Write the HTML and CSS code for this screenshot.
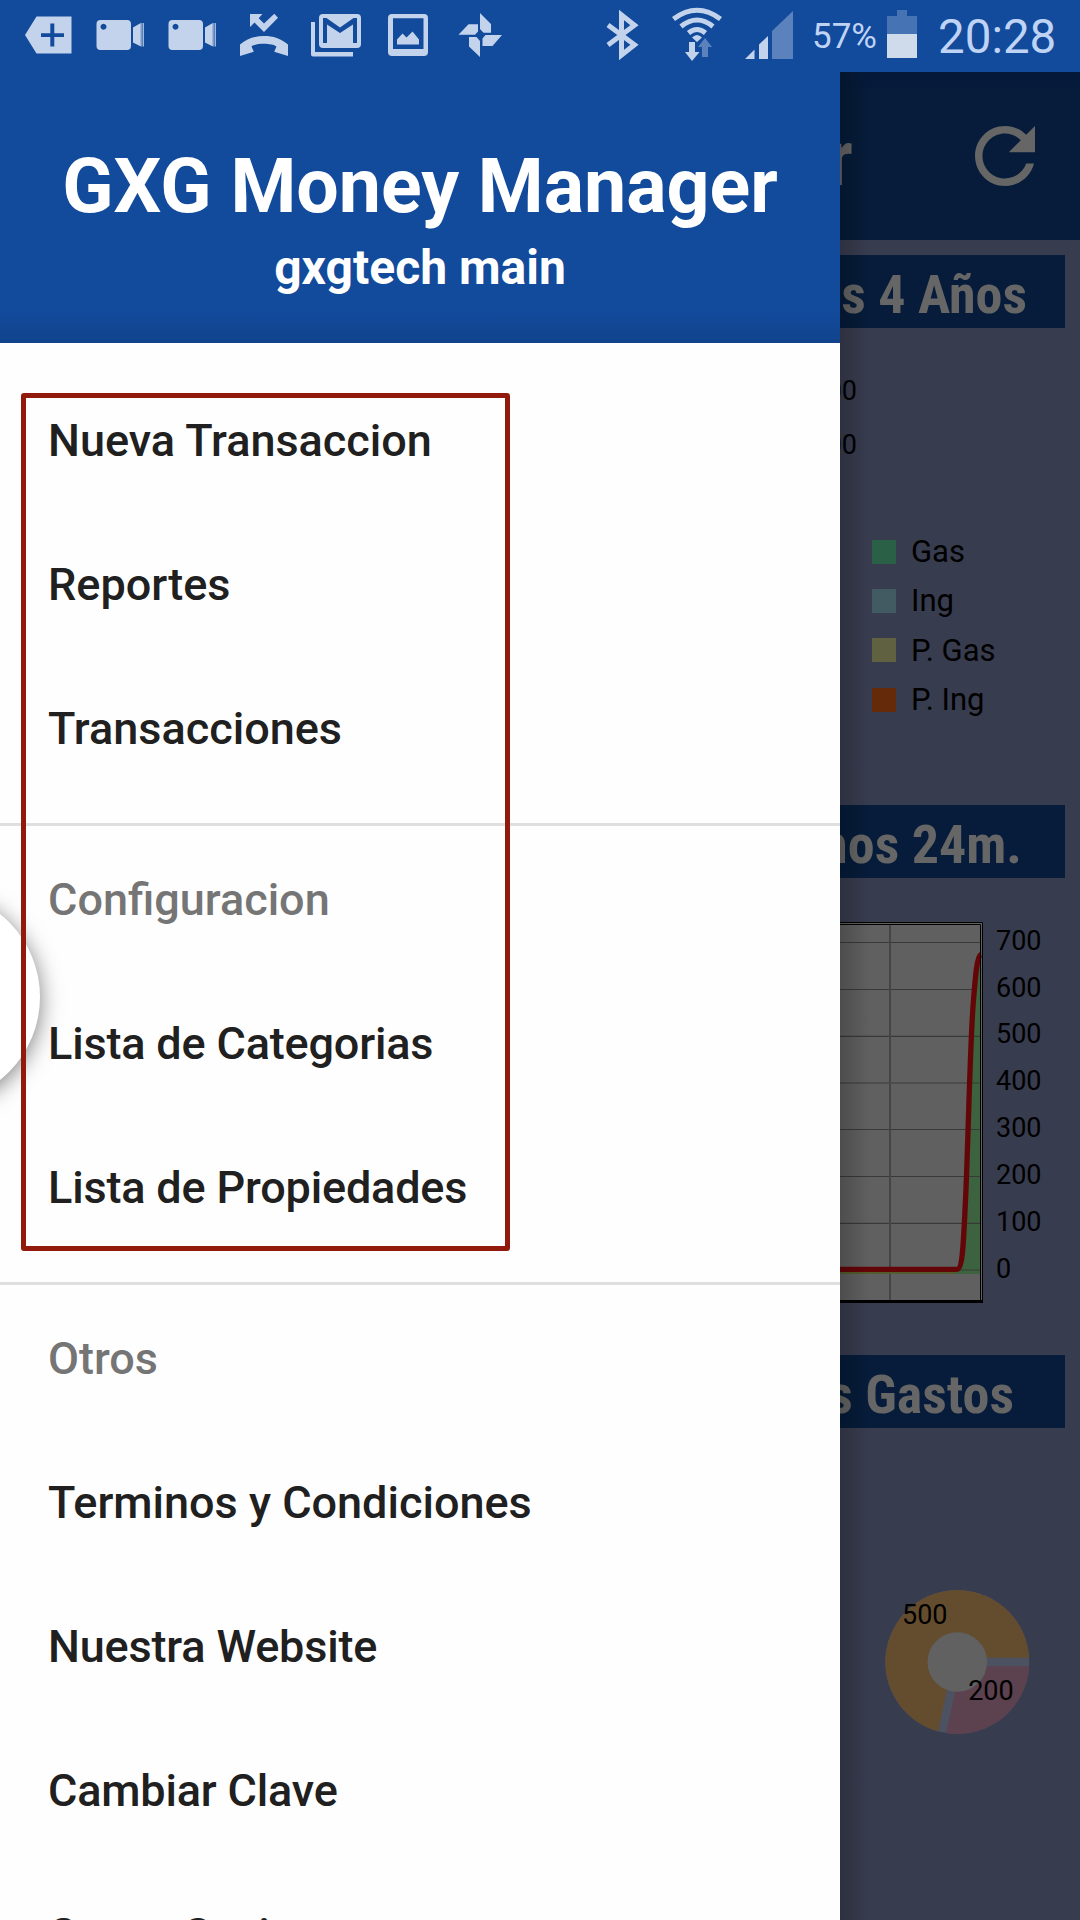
FILE: index.html
```html
<!DOCTYPE html>
<html lang="es">
<head>
<meta charset="utf-8">
<title>GXG Money Manager</title>
<link rel="stylesheet" href="styles.css">
</head>
<body>
<div class="phone">
  <header class="status">
    <div class="status-left">
      <svg class="slot" viewBox="12 0 72 72"><path fill-rule="evenodd" d="M25 35 36.5 16.500H71.500V53.500H36.500ZM50.300 23.500V33.200H41V37H50.300V46.500H54.300V37H64V33.200H54.300V23.500Z"/></svg>
      <svg class="slot" viewBox="84 0 72 72"><path fill-rule="evenodd" d="M100.500 20H127a4 4 0 0 1 4 4V46a4 4 0 0 1-4 4H100.500a4 4 0 0 1-4-4V24a4 4 0 0 1 4-4ZM103.500 23.800a3 3 0 1 0 .01 0Z"/><path d="M133 27.500 140.800 23V46.500L133 42.500ZM141.400 23h.9v23.500h-.9ZM142.900 23h.9v23.500h-.9Z"/></svg>
      <svg class="slot" viewBox="84 0 72 72"><path fill-rule="evenodd" d="M100.500 20H127a4 4 0 0 1 4 4V46a4 4 0 0 1-4 4H100.500a4 4 0 0 1-4-4V24a4 4 0 0 1 4-4ZM103.500 23.800a3 3 0 1 0 .01 0Z"/><path d="M133 27.500 140.800 23V46.500L133 42.500ZM141.400 23h.9v23.500h-.9ZM142.900 23h.9v23.500h-.9Z"/></svg>
      <svg class="slot" viewBox="228 0 72 72"><path d="M250 14H262.400L258.700 18.200 264 23.500 274.300 13.700 278 17.700 264 32 254.500 22.500 250 27ZM240 56V44.500C247 38.500 255 36 264 36S281 38.500 288 44.500V56L274.200 51.700 276.500 46.500C272 42.800 256 42.800 251.500 46.500L253.800 51.700Z"/></svg>
      <svg class="slot" viewBox="300 0 72 72"><path d="M311 22h4v30h38v4.500H313a2 2 0 0 1-2-2Z"/><rect x="319" y="14" width="42" height="34" rx="4"/><path class="cut" d="M323 43V18H326.500L340 27.500 353.500 18H357V43H353V24.500L340 33 327 24.500V43Z"/></svg>
      <svg class="slot" viewBox="372 0 72 72"><path fill-rule="evenodd" d="M392 14H424a4 4 0 0 1 4 4V52a4 4 0 0 1-4 4H392a4 4 0 0 1-4-4V18a4 4 0 0 1 4-4ZM393 18.200V49H423.500V18.200Z"/><path d="M397 44.500V39.500L402.500 33.500 406.500 37.500 412.500 31.500 419 39.500V44.500Z"/></svg>
      <svg class="slot" viewBox="444 0 72 72"><path d="M480 13 491 24V32.800H483.500L480 29ZM502 35 492.500 46H482.500V38.500L485.500 35ZM480 57 469 46.500V37H476.500L480 41ZM458.500 34.700 468.500 24.300H478V31.500L475 34.700Z"/></svg>
    </div>
    <div class="status-right">
      <svg class="bt" viewBox="606 0 34 72"><path class="line" d="M608 25 634.500 44.700 621.500 55V15L634.500 25.300 608 45"/></svg>
      <svg class="wifi" viewBox="670 0 54 72"><path class="arc" d="M673.500 19Q697 1.500 720.500 19M681 26.500Q697 13.500 713 26.500M688.500 33Q697 26 705.500 33"/><path d="M692 37.500Q697 32.500 702 37.500L697 42ZM689 42h6v10h4.500L692 61 685 52h4Z"/><path class="faint" d="M702 57V47H698L705 38 712 47H708V57Z"/></svg>
      <svg class="signal" viewBox="744 0 50 72"><path d="M745 59 754.500 49.500V59ZM759 59V44.500L768 36V59Z"/><path class="faint" d="M772 59V31L793 11V59Z"/></svg>
      <span class="percent">57%</span>
      <svg class="battery" viewBox="887 0 30 72"><path class="empty" d="M897 10h10v6h10v19H887V16h10Z"/><path class="full" d="M887 34h30v24H887Z"/></svg>
      <span class="clock">20:28</span>
    </div>
  </header>

  <main class="page">
    <div class="appbar">
      <span class="appbar-title">GXG Money Manager</span>
      <svg class="refresh" viewBox="0 0 24 24"><path d="M17.650 6.350C16.200 4.900 14.210 4 12 4c-4.420 0-7.990 3.580-7.990 8s3.570 8 7.990 8c3.730 0 6.840-2.550 7.730-6h-2.080c-.82 2.330-3.040 4-5.650 4-3.310 0-6-2.690-6-6s2.690-6 6-6c1.660 0 3.140.69 4.220 1.780L13 11h7V4l-2.350 2.350z"/></svg>
    </div>
    <section class="panel">
      <h2 class="heading years"><span>Ultimos 4 Años</span></h2>
      <div class="bars">
        <div class="ticks"><span>100</span><span>00</span></div>
        <ul class="legend">
          <li><i class="swatch gas"></i>Gas</li>
          <li><i class="swatch ing"></i>Ing</li>
          <li><i class="swatch pgas"></i>P. Gas</li>
          <li><i class="swatch ping"></i>P. Ing</li>
        </ul>
      </div>
    </section>
    <section class="panel">
      <h2 class="heading months"><span>Ultimos 24m.</span></h2>
      <svg class="chart" viewBox="780 878 300 477">
        <rect class="plot" x="780" y="922" width="203" height="381"/>
        <path class="grid" d="M780 942.500H981M780 989.500H981M780 1036.300H981M780 1083H981M780 1129.500H981M780 1176.500H981M780 1223.400H981M780 1270H981"/>
        <path class="gridv" d="M890 924V1301"/>
        <path class="area" d="M780 1274V1270H958C966 1262 966 1190 969 1110C972 1020 974 957 981 953V1274Z"/>
        <path class="grid" d="M958 1270H981M966 1223.400H981M968 1176.500H981M969 1129.500H981M971 1083H981M973 1036.300H981"/>
        <path class="olive" d="M780 1272.500H956"/>
        <path class="curve" d="M780 1269.300H957C963 1269.300 963.500 1240 965.500 1200C968 1150 970 1040 973.500 1000C975.500 975 977 956 981 954.500"/>
        <path class="frame" d="M780 922.500H982.500V1303M780 924.500H980.500V1302"/>
        <path class="base" d="M780 1301.500H983"/>
        <g class="axis">
          <text x="996" y="950">700</text><text x="996" y="997">600</text><text x="996" y="1043.300">500</text><text x="996" y="1090">400</text>
          <text x="996" y="1137">300</text><text x="996" y="1184">200</text><text x="996" y="1231">100</text><text x="996" y="1278">0</text>
        </g>
      </svg>
    </section>
    <section class="panel">
      <h2 class="heading expenses"><span>Ultimos Gastos</span></h2>
      <svg class="donut" viewBox="780 1428 300 477">
        <circle class="gap" cx="957.300" cy="1662" r="72"/>
        <path class="pink" d="M957.300 1666.300H1029.200A72 72 0 0 1 946 1733.100L961.500 1663Z"/>
        <path class="orange" d="M957.300 1657.700H1029.200A72 72 0 1 0 938 1731.400L953 1662Z"/>
        <circle class="hole" cx="957.300" cy="1662" r="29.800"/>
        <g class="axis"><text x="902" y="1624">500</text><text x="968.200" y="1700">200</text></g>
      </svg>
    </section>
  </main>

  <aside class="drawer">
    <div class="drawer-head">
      <h1 class="app-name">GXG Money Manager</h1>
      <p class="account">gxgtech main</p>
    </div>
    <nav>
      <ul class="menu">
        <li>Nueva Transaccion</li>
        <li>Reportes</li>
        <li>Transacciones</li>
      </ul>
      <ul class="menu divided">
        <li class="group">Configuracion</li>
        <li class="tight">Lista de Categorias</li>
        <li class="tight">Lista de Propiedades</li>
      </ul>
      <ul class="menu divided">
        <li class="group">Otros</li>
        <li>Terminos y Condiciones</li>
        <li class="tight">Nuestra Website</li>
        <li class="tight">Cambiar Clave</li>
        <li>Cerrar Sesion</li>
      </ul>
    </nav>
    <div class="bubble"></div>
    <div class="callout"></div>
  </aside>
</div>
</body>
</html>
```
FILE: styles.css
```css
* { box-sizing: border-box; }
body, h1, h2, p, ul { margin: 0; padding: 0; }
ul { list-style: none; }
svg { display: block; flex: none; }
body { font-family: Roboto, "Liberation Sans", sans-serif; }

.phone {
  position: relative;
  width: 1080px;
  height: 1920px;
  overflow: hidden;
  background: #383c4f;
}

/* Status bar */
.status {
  position: relative;
  z-index: 3;
  display: flex;
  justify-content: space-between;
  height: 72px;
  padding: 0 23px 0 12px;
  background: #124a9c;
  fill: #c3d3ec;
}
.status-left, .status-right { display: flex; }
.slot { width: 72px; height: 72px; }
.cut { fill: #124a9c; }
.bt { width: 34px; height: 72px; margin-right: 30px; }
.wifi { width: 54px; height: 72px; margin-right: 20px; }
.signal { width: 50px; height: 72px; margin-right: 18px; }
.battery { width: 30px; height: 72px; margin-right: 21px; }
.line, .arc { fill: none; stroke: #c3d3ec; }
.line { stroke-width: 5; }
.arc { stroke-width: 5; }
.faint { fill: #5c82bd; }
.empty { fill: #4673b4; }
.full { fill: #cfdaeb; }
.percent, .clock { color: #bfd3f5; white-space: nowrap; }
.percent { width: 75px; font-size: 35px; line-height: 74px; }
.clock { width: 119px; font-size: 47.500px; font-weight: 400; line-height: 74px; }

/* Dimmed page behind the drawer */
.appbar {
  display: flex;
  align-items: center;
  justify-content: flex-end;
  gap: 107px;
  height: 168px;
  padding-right: 30px;
  background: linear-gradient(#04193a, #061c3a 24px);
  color: #666;
}
.appbar-title {
  padding-top: 5px;
  font-family: "Roboto Condensed", Roboto, sans-serif;
  font-stretch: 75%;
  font-size: 78px;
  font-weight: 700;
  line-height: 90px;
}
.refresh { width: 90px; height: 90px; fill: #666; }
.panel { display: flex; flex-direction: column; height: 550px; }
.page .panel:nth-of-type(1) { margin-top: 15px; }
.heading {
  height: 73px;
  margin: 0 15px;
  background: #061c3a;
  color: #666;
  font-family: "Roboto Condensed", Roboto, sans-serif;
  font-stretch: 75%;
  font-size: 54px;
  font-weight: 700;
  line-height: 79px;
  text-align: right;
  white-space: nowrap;
}
.years { padding-right: 38px; }
.months { padding-right: 43px; }
.expenses { padding-right: 51px; }
.bars { display: flex; }
.ticks {
  display: flex;
  flex-direction: column;
  width: 857px;
  padding-top: 36px;
  font-size: 27px;
  line-height: 54px;
  text-align: right;
}
.legend { padding: 199px 0 0 15px; font-size: 31px; }
.legend li { display: flex; align-items: center; gap: 15px; height: 49.300px; white-space: nowrap; }
.swatch { width: 24px; height: 24px; }
.gas { background: #2a6045; }
.ing { background: #425b62; }
.pgas { background: #5f6140; }
.ping { background: #652a0a; }
.chart, .donut { width: 300px; height: 477px; align-self: flex-end; }
.plot { fill: #606060; }
.grid, .gridv, .frame, .base, .curve, .olive { fill: none; }
.grid { stroke: #383a38; stroke-width: 1.200; }
.gridv { stroke: #454545; stroke-width: 2; }
.frame { stroke: #000; stroke-width: 1; }
.base { stroke: #000; stroke-width: 3; }
.area { fill: #3c623f; }
.olive { stroke: #5c5a28; stroke-width: 2; }
.curve { stroke: #640508; stroke-width: 5.300; }
.axis { font-size: 27px; fill: #000; }
.gap { fill: #4d5263; }
.pink { fill: #5c414f; }
.orange { fill: #644d2f; }
.hole { fill: #616161; }

/* Navigation drawer */
.drawer {
  position: absolute;
  z-index: 2;
  top: 0;
  left: 0;
  width: 840px;
  height: 1920px;
  background: #fefefe;
}
.drawer::before {
  content: "";
  position: absolute;
  z-index: -1;
  top: 72px;
  left: 840px;
  width: 30px;
  height: 1848px;
  background: linear-gradient(90deg, rgba(0,0,0,.2), rgba(0,0,0,0));
}
.drawer-head {
  height: 343px;
  padding-top: 141px;
  background: linear-gradient(#124a9c 310px, #11438c);
  color: #fff;
  text-align: center;
}
.app-name { font-size: 75.300px; line-height: 90px; font-weight: 700; }
.account { margin-top: 9px; font-size: 48px; line-height: 56px; font-weight: 700; }
.menu { padding: 24px 0; }
.divided { padding-top: 0; border-top: 3px solid #dfdfdf; }
.menu li {
  height: 144px;
  padding-left: 48px;
  color: #202020;
  font-size: 45px;
  font-weight: 500;
  line-height: 148px;
  white-space: nowrap;
}
.menu .group { color: #757575; }
.menu .tight { letter-spacing: -.17px; }
.bubble {
  position: absolute;
  top: 891px;
  left: -172px;
  width: 212px;
  height: 212px;
  border-radius: 50%;
  background: #fff;
  box-shadow: 0 4px 22px rgba(0,0,0,.5);
}
.callout {
  position: absolute;
  top: 393px;
  left: 21px;
  width: 489px;
  height: 858px;
  border: 5px solid #911a0c;
  border-radius: 3px;
}
```
